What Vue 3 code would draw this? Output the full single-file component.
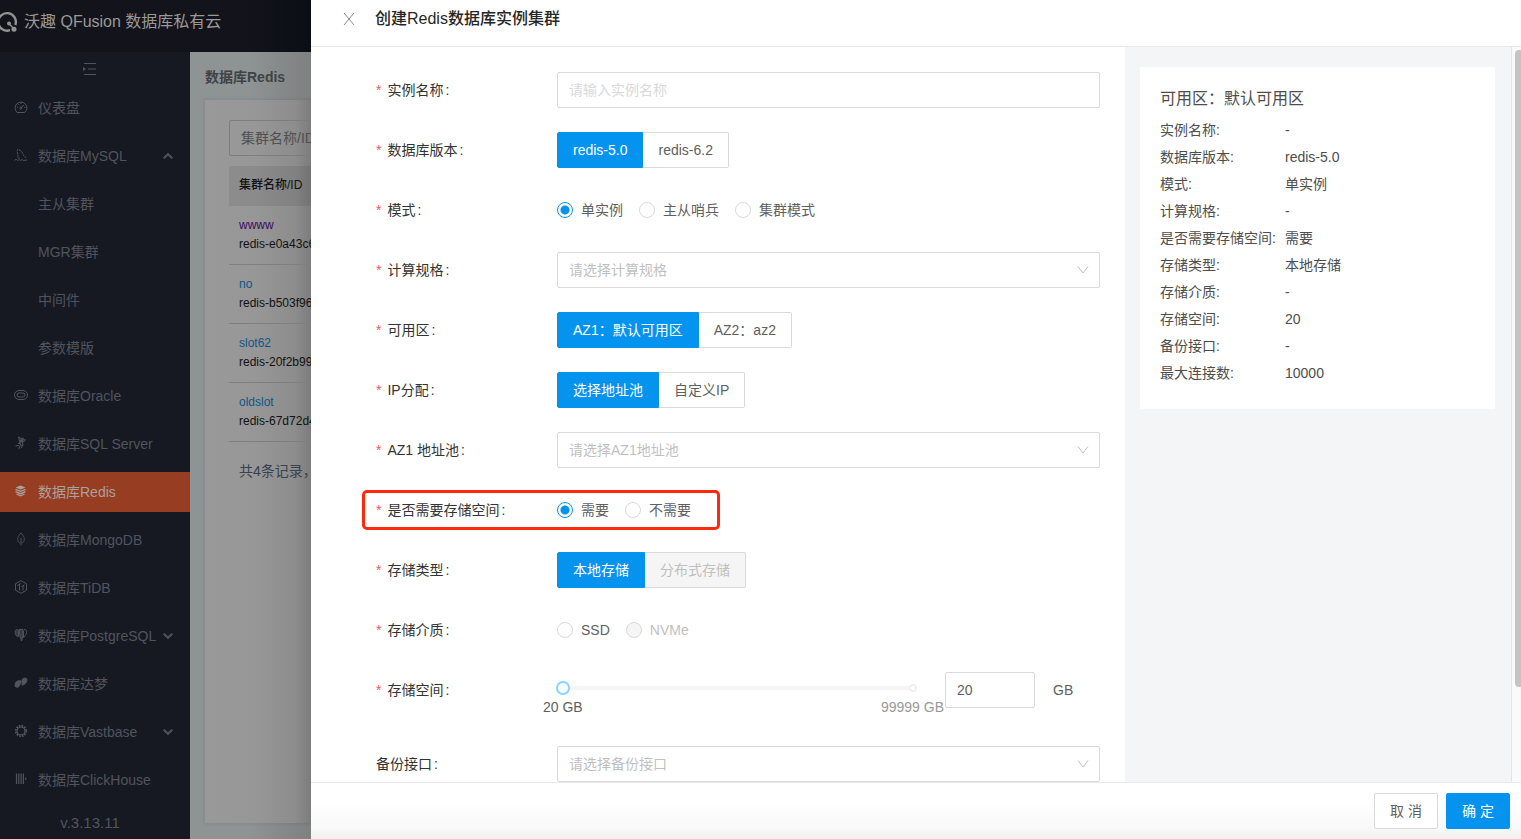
<script setup>
import { ref } from 'vue'

const menu = [
  { label: '仪表盘', icon: 'dash' },
  { label: '数据库MySQL', icon: 'mysql', arrow: 'up' },
  { label: '主从集群' },
  { label: 'MGR集群' },
  { label: '中间件' },
  { label: '参数模版' },
  { label: '数据库Oracle', icon: 'oracle' },
  { label: '数据库SQL Server', icon: 'mssql' },
  { label: '数据库Redis', icon: 'redis', active: true },
  { label: '数据库MongoDB', icon: 'mongo' },
  { label: '数据库TiDB', icon: 'tidb' },
  { label: '数据库PostgreSQL', icon: 'pg', arrow: 'down' },
  { label: '数据库达梦', icon: 'dm' },
  { label: '数据库Vastbase', icon: 'vast', arrow: 'down' },
  { label: '数据库ClickHouse', icon: 'click' },
]

const clusters = [
  { name: 'wwww', id: 'redis-e0a43c68', visited: true },
  { name: 'no', id: 'redis-b503f961' },
  { name: 'slot62', id: 'redis-20f2b994' },
  { name: 'oldslot', id: 'redis-67d72d4a' },
]

const fields = [
  { key: 'name', label: '实例名称', type: 'text', hint: '请输入实例名称' },
  { key: 'version', label: '数据库版本', type: 'segment', options: [{ t: 'redis-5.0' }, { t: 'redis-6.2' }] },
  { key: 'mode', label: '模式', type: 'radio', options: [{ t: '单实例' }, { t: '主从哨兵' }, { t: '集群模式' }] },
  { key: 'spec', label: '计算规格', type: 'select', hint: '请选择计算规格' },
  { key: 'zone', label: '可用区', type: 'segment', options: [{ t: 'AZ1：默认可用区' }, { t: 'AZ2：az2' }] },
  { key: 'ip', label: 'IP分配', type: 'segment', options: [{ t: '选择地址池' }, { t: '自定义IP' }] },
  { key: 'pool', label: 'AZ1 地址池', type: 'select', hint: '请选择AZ1地址池' },
  { key: 'storage', label: '是否需要存储空间', type: 'radio', marked: true, options: [{ t: '需要' }, { t: '不需要' }] },
  { key: 'kind', label: '存储类型', type: 'segment', options: [{ t: '本地存储' }, { t: '分布式存储', off: true }] },
  { key: 'media', label: '存储介质', type: 'radio', options: [{ t: 'SSD' }, { t: 'NVMe', off: true }] },
  { key: 'size', label: '存储空间', type: 'slider' },
  { key: 'backup', label: '备份接口', type: 'select', hint: '请选择备份接口', optional: true },
]

const form = ref({
  name: '',
  version: 'redis-5.0',
  mode: '单实例',
  spec: '',
  zone: 'AZ1：默认可用区',
  ip: '选择地址池',
  pool: '',
  storage: '需要',
  kind: '本地存储',
  media: '',
  size: 20,
  backup: '',
})

const summary = [
  ['实例名称', '-'],
  ['数据库版本', 'redis-5.0'],
  ['模式', '单实例'],
  ['计算规格', '-'],
  ['是否需要存储空间', '需要'],
  ['存储类型', '本地存储'],
  ['存储介质', '-'],
  ['存储空间', '20'],
  ['备份接口', '-'],
  ['最大连接数', '10000'],
]
</script>

<template>
  <div class="page">
    <header class="topbar">
      <svg class="logo" width="18" height="22" viewBox="0 0 18 22" fill="none" stroke="#929292">
        <path d="M10 19.200A8.800 8.800 0 1 1 15.300 14" stroke-width="2.400" />
        <path d="M9 12.500 14 18" stroke-width="1.400" />
        <circle cx="9" cy="12.500" r="2" fill="#929292" stroke="none" />
        <circle cx="14" cy="18.200" r="2.500" fill="#929292" stroke="none" />
      </svg>
      <span>沃趣 QFusion 数据库私有云</span>
    </header>
    <div class="shell">
      <nav class="side">
        <button class="fold" aria-label="收起菜单">
          <svg width="14" height="12" viewBox="0 0 14 12" fill="none" stroke="currentColor">
            <path d="M1 .5h12M5 6h8M1 11.500h12" />
            <path d="M0 4v4l3-2z" fill="currentColor" stroke="none" />
          </svg>
        </button>
        <a v-for="m in menu" :key="m.label" href="#" class="item" :class="{ active: m.active }">
          <span class="ico">
            <svg v-if="m.icon" width="14" height="14" viewBox="0 0 14 14" fill="none" stroke="currentColor" stroke-width="1">
              <template v-if="m.icon === 'dash'">
                <path d="M3.200 12.500A5.900 5.900 0 1 1 10.800 12.500zM7 7.800 9.800 5M3 7.200h1M10.200 7.500h1M7 3v1M4.200 4.300l.7.7" />
                <circle cx="6.800" cy="8" r="1" />
              </template>
              <template v-else-if="m.icon === 'mysql'">
                <path d="M3.500 9.500C5 8 2.500 4 3.500 1.500 6.500 1.500 8.500 4 9.200 6.500c.3 1.500 2 2 2.800 3.500" stroke-dasharray="2.500 .7" />
                <path d="M.5 12.500c1-1.500 2-1.500 3 0 1-1 2-1 3 0 1-1 2-1 3 0l3.500-.5M5 9.500v1.500" />
              </template>
              <template v-else-if="m.icon === 'oracle'">
                <rect x=".5" y="2.500" width="13" height="9" rx="4.500" />
                <rect x="3" y="5" width="8" height="4" rx="2" />
              </template>
              <template v-else-if="m.icon === 'mssql'">
                <path d="M4.500 1 7 2.500 9 2l.5 1.500L11.500 4 8.500 6.500 9 9.500 6.500 9zM7 2.500 6 8M5 9.500 1.500 10M4 7.500 6.500 7M6 9.500 5 13M8 9.500 7.500 12" />
                <path d="M7 4 9.500 3.500 8 6.500z" fill="currentColor" />
              </template>
              <template v-else-if="m.icon === 'redis'">
                <path d="M6.500 1.500 11.500 3.500 6.500 5.600 1.500 3.500z" fill="currentColor" stroke="none" />
                <path d="M1.500 5.300 6.500 7.400 11.500 5.300M1.500 7.600 6.500 9.700 11.500 7.600M2.500 10 6.500 11.800 10.500 10" stroke-width="1.300" />
              </template>
              <template v-else-if="m.icon === 'mongo'">
                <path d="M7 1C4 4 3 7 4.200 9.500c.6 1 1.600 1.500 2.300 1.700M7 1c3 3 4 6 2.800 8.500-.6 1-1.600 1.500-2.300 1.700M7 6v7.500" stroke-width=".9" />
              </template>
              <template v-else-if="m.icon === 'tidb'">
                <path d="M7 .7 12.500 3.800v6.400L7 13.300 1.500 10.200V3.800zM3.500 5.500 7 3.500M5.500 4.500v6M9 5.500v5M7.500 6.500 10.500 5" />
              </template>
              <template v-else-if="m.icon === 'pg'">
                <path d="M3.500 1.500C.5 1.500.8 4.500 2 7c.8 1.600 1.500 2 2.500 1.500V3zM5 1.500h4v6L7.500 13 6 8z" fill="currentColor" fill-opacity=".55" />
                <path d="M10 1.500c3.500 0 3 3 1.500 6L9.500 9.500V3" />
              </template>
              <template v-else-if="m.icon === 'dm'">
                <path d="M1.500 6.500C3 4.500 5.500 4.500 7 5L5.500 10C3.500 12 .8 11.500 1 9zM8 3.500 10 2.200c2-.5 3.200.3 2.800 2.300C12.500 7 10.500 8.800 8 9.200z" fill="currentColor" />
              </template>
              <template v-else-if="m.icon === 'vast'">
                <circle cx="7" cy="7" r="5.200" stroke-width="2" stroke-dasharray="1.600 1.120" />
                <circle cx="7" cy="7" r="4" stroke-width="1" />
              </template>
              <template v-else>
                <path d="M2.500 1.500v10.500M4.800 1.500v10.500M7.100 1.500v10.500M9.400 1.500v10.500" stroke-width="1.200" />
                <path d="M11.700 5.800v2" stroke-width="1.400" />
              </template>
            </svg>
          </span>
          <span>{{ m.label }}</span>
          <svg v-if="m.arrow" class="arrow" :class="m.arrow" width="10" height="8" viewBox="0 0 10 8" fill="none" stroke="currentColor" stroke-width="2">
            <path d="M.8 1.700 5 5.900 9.200 1.700" />
          </svg>
        </a>
        <div class="ver">v.3.13.11</div>
      </nav>
      <main class="main">
        <h2>数据库Redis</h2>
        <section class="panel">
          <input class="search" placeholder="集群名称/ID" aria-label="集群名称/ID" />
          <table class="list">
            <thead><tr><th>集群名称/ID</th></tr></thead>
            <tbody>
              <tr v-for="c in clusters" :key="c.id">
                <td>
                  <a href="#" :class="{ visited: c.visited }">{{ c.name }}</a>
                  <div>{{ c.id }}</div>
                </td>
              </tr>
            </tbody>
          </table>
          <p class="count">共4条记录，</p>
        </section>
      </main>
    </div>

    <div class="drawer" role="dialog" aria-labelledby="drawer-title">
      <header class="dhead">
        <button class="close" aria-label="关闭">
          <svg width="12" height="12" viewBox="0 0 12 12" fill="none" stroke="currentColor"><path d="M1 0l10 12M11 0 1 12" /></svg>
        </button>
        <h1 id="drawer-title">创建Redis数据库实例集群</h1>
      </header>
      <div class="dbody">
        <form class="form" @submit.prevent>
          <div v-for="f in fields" :key="f.key" class="row" :class="{ marked: f.marked }">
            <label :id="'l-' + f.key" class="lab" :for="'f-' + f.key">
              <i v-if="!f.optional">*</i>{{ f.label }}<b>:</b>
            </label>
            <input v-if="f.type === 'text'" :id="'f-' + f.key" v-model="form[f.key]" class="box" type="text" :placeholder="f.hint" />
            <div v-else-if="f.type === 'select'" class="pick">
              <select :id="'f-' + f.key" v-model="form[f.key]" class="box">
                <option value="">{{ f.hint }}</option>
              </select>
              <svg width="12" height="8" viewBox="0 0 12 8" fill="none" stroke="#bfbfbf"><path d="M1 .5 6 7 11 .5" /></svg>
            </div>
            <div v-else-if="f.type === 'segment'" class="segs" role="radiogroup" :aria-labelledby="'l-' + f.key">
              <label v-for="(o, i) in f.options" :key="o.t" class="seg" :class="{ on: form[f.key] === o.t, off: o.off }">
                <input :id="i ? null : 'f-' + f.key" v-model="form[f.key]" type="radio" :name="f.key" :value="o.t" :disabled="o.off" />
                {{ o.t }}
              </label>
            </div>
            <div v-else-if="f.type === 'radio'" class="radios" role="radiogroup" :aria-labelledby="'l-' + f.key">
              <label v-for="(o, i) in f.options" :key="o.t" class="rad" :class="{ off: o.off }">
                <input :id="i ? null : 'f-' + f.key" v-model="form[f.key]" type="radio" :name="f.key" :value="o.t" :disabled="o.off" />
                <span>{{ o.t }}</span>
              </label>
            </div>
            <div v-else class="size">
              <div class="slider">
                <input :id="'f-' + f.key" v-model="form.size" type="range" min="20" max="99999" />
                <span class="dot"></span>
                <div class="marks"><span>20 GB</span><span class="end">99999 GB</span></div>
              </div>
              <input v-model="form.size" class="box num" type="text" aria-label="存储空间 GB" />
              <span class="unit">GB</span>
            </div>
          </div>
        </form>
        <aside class="aside">
          <div class="card">
            <h3>可用区：默认可用区</h3>
            <dl>
              <div v-for="s in summary" :key="s[0]">
                <dt>{{ s[0] }}:</dt>
                <dd>{{ s[1] }}</dd>
              </div>
            </dl>
          </div>
        </aside>
        <div class="rail"><div class="thumb"></div></div>
      </div>
      <footer class="dfoot">
        <button class="btn">取 消</button>
        <button class="btn primary">确 定</button>
      </footer>
    </div>
  </div>
</template>

<style>
body {
  margin: 0;
  overflow: hidden;
}
</style>

<style scoped>
* {
  box-sizing: border-box;
}
.page {
  position: relative;
  height: 100vh;
  display: flex;
  flex-direction: column;
  overflow: hidden;
  background: #8e9394;
  font: 14px/22px "Liberation Sans", "Noto Sans CJK SC", sans-serif;
  color: #5f5f5f;
}
button, input, select {
  font: inherit;
  color: inherit;
  margin: 0;
}
a {
  color: inherit;
  text-decoration: none;
}
h1, h2, h3, p, dl, dd {
  margin: 0;
}
.topbar {
  flex: none;
  height: 52px;
  padding-bottom: 8px;
  display: flex;
  align-items: center;
  gap: 6px;
  font-size: 16px;
  color: #999;
  background: linear-gradient(90deg, #13131b 0, #13131b 240px, #0b0e16 311px);
}
.shell {
  flex: 1;
  min-height: 0;
  display: flex;
}
.side {
  flex: none;
  width: 190px;
  display: flex;
  flex-direction: column;
  gap: 8px;
  background: #161922;
  color: #51545d;
}
.fold {
  height: 28px;
  padding: 5px 10px 0 0;
  border: 0;
  background: none;
  display: flex;
  align-items: center;
  justify-content: center;
}
.item {
  flex: none;
  height: 40px;
  padding: 0 17px 0 14px;
  display: flex;
  align-items: center;
  white-space: nowrap;
}
.item.active {
  background: #963d22;
  color: #aaa19e;
}
.ico {
  display: flex;
  width: 24px;
  height: 16px;
}
.arrow {
  margin-left: auto;
}
.arrow.up {
  transform: rotate(180deg);
}
.ver {
  padding-right: 10px;
  text-align: center;
  font-size: 15px;
  line-height: 30px;
}
.main {
  flex: 1;
  display: flex;
  flex-direction: column;
  padding: 14px 15px 16px;
  background: linear-gradient(90deg, #8e9394 0, #8e9394 60px, #7f8080 121px);
}
.main h2 {
  font-size: 14px;
  line-height: 22px;
  color: #404345;
}
.panel {
  flex: 1;
  margin-top: 12px;
  padding: 20px 24px;
  background: linear-gradient(90deg, #999 0, #979797 50px, #8d8d8d 90px, #7c7c7c 106px);
  box-shadow: 0 0 4px rgba(0, 0, 0, 0.12);
}
.search {
  display: block;
  width: 100%;
  height: 36px;
  padding: 0 11px;
  border: 1px solid #7d7d7d;
  border-radius: 2px;
  background: none;
}
.search::placeholder {
  color: #505050;
}
.list {
  width: 100%;
  margin-top: 10px;
  border-collapse: collapse;
  font-size: 12px;
  line-height: 19px;
  color: #111;
}
.list th {
  height: 40px;
  padding: 0 10px 2px;
  text-align: left;
  font-weight: 500;
  background: rgba(0, 0, 0, 0.08);
}
.list td {
  padding: 10px;
  border-bottom: 1px solid #7f7f7f;
}
.list a {
  color: #0e5688;
}
.list a.visited {
  color: #3a0a66;
}
.count {
  margin: 18px 10px 0;
  color: #37414f;
}
.drawer {
  position: absolute;
  top: 0;
  right: 0;
  bottom: 0;
  left: 311px;
  display: flex;
  flex-direction: column;
  background: #fff;
}
.dhead {
  flex: none;
  height: 47px;
  padding: 0 32px 9px;
  display: flex;
  align-items: center;
  gap: 20px;
  border-bottom: 1px solid #e8e8e8;
}
.close {
  padding: 0;
  border: 0;
  width: 12px;
  height: 12px;
  background: none;
  display: flex;
  color: #888;
}
.dhead h1 {
  font-size: 16px;
  font-weight: 500;
  color: #262626;
}
.dbody {
  flex: 1;
  min-height: 0;
  display: flex;
}
.form {
  flex: 1;
  min-width: 0;
  overflow: hidden;
  padding: 25px 25px 0 65px;
  display: flex;
  flex-direction: column;
  gap: 24px;
}
.row {
  flex: none;
  position: relative;
  display: flex;
}
.row.marked::before {
  content: "";
  position: absolute;
  left: -14px;
  top: -2px;
  box-sizing: border-box;
  width: 358px;
  height: 40px;
  border: 3px solid #ff2a0c;
  border-radius: 5px;
  pointer-events: none;
}
.lab {
  flex: none;
  width: 181px;
  line-height: 36px;
  color: #333;
}
.lab i {
  margin-right: 6px;
  font-style: normal;
  color: #f5595c;
}
.lab b {
  margin-left: 2px;
  font-weight: 400;
}
.box {
  display: block;
  width: 100%;
  height: 36px;
  padding: 0 11px;
  border: 1px solid #d9d9d9;
  border-radius: 2px;
  background: #fff;
  outline: 0;
}
.box::placeholder {
  color: #d9d9d9;
}
.pick {
  flex: 1;
  display: grid;
  align-items: center;
}
.pick > * {
  grid-area: 1 / 1;
}
.pick select {
  appearance: none;
  color: #bfbfbf;
}
.pick svg {
  justify-self: end;
  margin-right: 11px;
  pointer-events: none;
}
.segs {
  display: flex;
}
.seg {
  position: relative;
  height: 36px;
  padding: 0 15px;
  border: 1px solid #d9d9d9;
  border-left-width: 0;
  line-height: 34px;
  white-space: nowrap;
}
.seg:first-child {
  border-left-width: 1px;
  border-radius: 2px 0 0 2px;
}
.seg:last-child {
  border-radius: 0 2px 2px 0;
}
.seg.on {
  border-color: #0593f0;
  background: #0593f0;
  color: #fff;
}
.seg.off {
  background: #f5f5f5;
  color: #bfbfbf;
}
.seg input {
  position: absolute;
  opacity: 0;
}
.radios {
  display: flex;
  gap: 16px;
}
.rad {
  height: 36px;
  display: flex;
  align-items: center;
  gap: 8px;
}
.rad.off {
  color: #bfbfbf;
}
.rad input {
  appearance: none;
  width: 16px;
  height: 16px;
  border: 1px solid #d9d9d9;
  border-radius: 50%;
  background: #fff;
}
.rad input:checked {
  border-color: #0593f0;
  background: radial-gradient(circle, #0593f0 0 4px, #fff 5px);
}
.rad input:disabled {
  background: #f5f5f5;
}
.size {
  flex: 1;
  display: flex;
  height: 50px;
}
.slider {
  position: relative;
  flex: 1;
  padding-top: 8px;
  margin-right: 26px;
}
.slider input {
  display: block;
  appearance: none;
  width: 100%;
  height: 16px;
  background: linear-gradient(#f5f5f5, #f5f5f5) no-repeat center / calc(100% - 12px) 4px;
}
.slider input::-webkit-slider-thumb {
  appearance: none;
  position: relative;
  z-index: 1;
  width: 12px;
  height: 12px;
  border: 1px solid #7fd5ff;
  border-radius: 50%;
  background: #fff;
  box-shadow: 0 0 0 1px #7fd5ff;
}
.dot {
  position: absolute;
  top: 12px;
  right: 2px;
  width: 8px;
  height: 8px;
  border: 2px solid #f0f0f0;
  border-radius: 50%;
  background: #fff;
}
.marks {
  display: flex;
  justify-content: space-between;
  margin: 0 -25px 0 -14px;
}
.marks .end {
  color: #999;
}
.box.num {
  width: 90px;
}
.unit {
  width: 47px;
  margin-left: 18px;
  line-height: 36px;
}
.aside {
  flex: none;
  width: 386px;
  padding: 20px 16px 0 15px;
  background: #f4f5f7;
}
.card {
  padding: 21px 20px 22px;
  background: #fff;
  color: #4d4d4d;
}
.card h3 {
  margin-bottom: 7px;
  font-size: 16px;
  font-weight: 400;
}
.card dl div {
  display: flex;
  line-height: 27px;
}
.card dt {
  width: 125px;
}
.rail {
  flex: none;
  width: 10px;
  padding: 3px 0 0 3px;
  border-left: 1px solid #e6e6e6;
  background: #fafafa;
}
.thumb {
  height: 87%;
  border-radius: 4px 0 0 4px;
  background: #c4c4c4;
}
.dfoot {
  flex: none;
  height: 57px;
  padding: 10px 11px 0;
  display: flex;
  justify-content: flex-end;
  gap: 8px;
  border-top: 1px solid #e8e8e8;
  background: linear-gradient(#fff 30%, #f9f9f9 80%, #f0f0f0);
}
.btn {
  width: 64px;
  height: 36px;
  padding: 0;
  border: 1px solid #d9d9d9;
  border-radius: 2px;
  background: #fff;
}
.btn.primary {
  border-color: #0593f0;
  background: #0593f0;
  color: #fff;
}
</style>
